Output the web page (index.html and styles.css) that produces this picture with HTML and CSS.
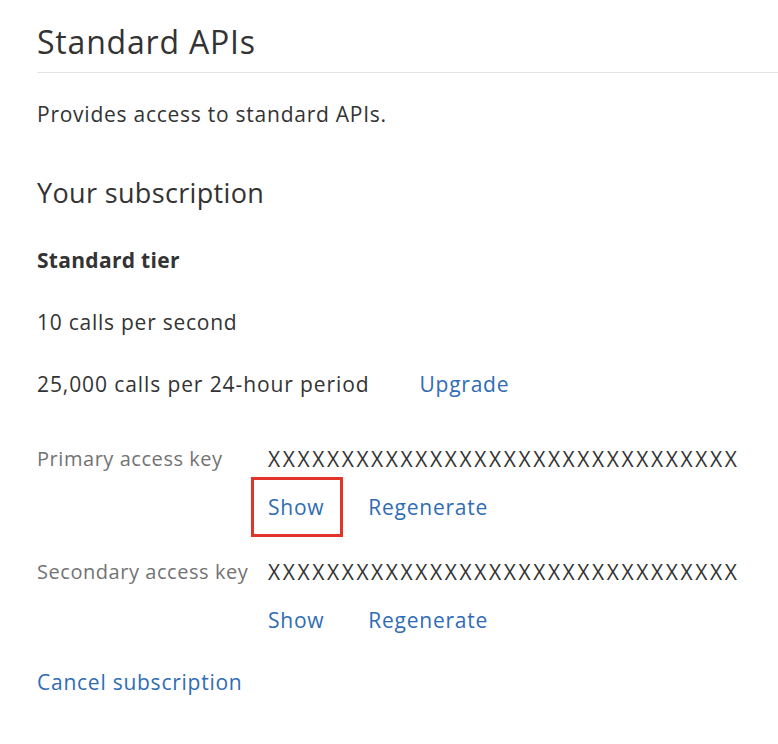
FILE: index.html
```html
<!DOCTYPE html>
<html>
<head>
    <title>Standard APIs</title>
    <meta charset="utf-8">
    <link rel="stylesheet" href="styles.css">
</head>
<body>
    <h1 class="title">Standard APIs</h1>
    <p class="desc">Provides access to standard APIs.</p>

    <h2 class="subtitle">Your subscription</h2>

    <div class="tier">
        <div class="tier-name">Standard tier</div>
        <div>10 calls per second</div>
        <div class="quota">
            <span>25,000 calls per 24-hour period</span>
            <a href="#" class="link">Upgrade</a>
        </div>
    </div>

    <div class="key-row">
        <div class="key-label">Primary access key</div>
        <div class="key-value">XXXXXXXXXXXXXXXXXXXXXXXXXXXXXXXX</div>
        <div class="key-actions">
            <a href="#" class="link marked">Show</a>
            <a href="#" class="link">Regenerate</a>
        </div>
    </div>

    <div class="key-row">
        <div class="key-label">Secondary access key</div>
        <div class="key-value">XXXXXXXXXXXXXXXXXXXXXXXXXXXXXXXX</div>
        <div class="key-actions">
            <a href="#" class="link">Show</a>
            <a href="#" class="link">Regenerate</a>
        </div>
    </div>

    <a href="#" class="link cancel">Cancel subscription</a>
</body>
</html>
```

FILE: styles.css
```css
body {
    font-family: "Open Sans", "Noto Sans", sans-serif;
    margin: 0;
    padding: 22px 0 0 37px;
    color: #333;
    font-size: 21px;
    letter-spacing: 0.75px;
    line-height: 28px;
    background: #fff;
}
.title {
    font-size: 32px;
    font-weight: normal;
    letter-spacing: 0.8px;
    line-height: 39px;
    margin: 0;
    padding-bottom: 11px;
    border-bottom: 1px solid #e2e2e2;
}
.desc {
    margin: 27px 0 0;
}
.subtitle {
    font-size: 27px;
    font-weight: normal;
    letter-spacing: 0.35px;
    line-height: 34px;
    margin: 48px 0 0;
}
.tier {
    display: flex;
    flex-direction: column;
    gap: 34px;
    margin-top: 36px;
}
.tier-name {
    font-weight: bold;
    letter-spacing: 0.3px;
}
.quota {
    display: flex;
    gap: 50px;
}
.quota span {
    letter-spacing: 0.9px;
}
.link {
    color: #2f6cb4;
    text-decoration: none;
}
.key-row {
    display: grid;
    grid-template-columns: 231px auto;
    row-gap: 20px;
    margin-top: 47px;
}
.key-row + .key-row {
    margin-top: 37px;
}
.key-label {
    color: #737373;
    font-size: 20px;
    letter-spacing: 0.55px;
}
.key-value {
    color: #333;
    letter-spacing: 2.6px;
}
.key-actions {
    grid-column: 2;
    display: flex;
    gap: 44px;
}
.marked {
    position: relative;
}
.marked::after {
    content: "";
    position: absolute;
    left: -17px;
    right: -19px;
    top: -16px;
    bottom: -16px;
    border: 3px solid #e2342b;
}
.cancel {
    display: inline-block;
    margin-top: 34px;
}
```
